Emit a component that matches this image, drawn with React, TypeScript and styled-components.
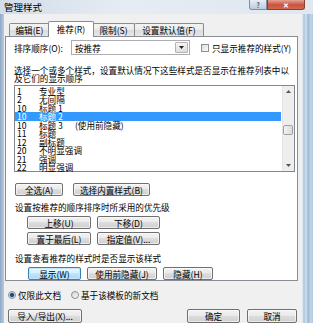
import React from 'react'
import styled, { createGlobalStyle, css } from 'styled-components'

const FONT = `"Noto Sans CJK SC", "Liberation Sans", sans-serif`

const STYLES = [
  { num: '1', name: '专业型' },
  { num: '2', name: '无间隔' },
  { num: '10', name: '标题 1' },
  { num: '10', name: '标题 2', selected: true },
  { num: '10', name: '标题 3', extra: '(使用前隐藏)' },
  { num: '11', name: '标题' },
  { num: '12', name: '副标题' },
  { num: '20', name: '不明显强调' },
  { num: '21', name: '强调' },
  { num: '22', name: '明显强调' },
]

const TABS = [
  { label: '编辑(E)', width: 41 },
  { label: '推荐(R)', width: 46, active: true },
  { label: '限制(S)', width: 43 },
  { label: '设置默认值(F)', width: 70 },
]

export default function App() {
  return (
    <>
      <GlobalStyle />
      <Window>
        <TitleBar>
          <Title>管理样式</Title>
          <CaptionGroup>
            <CaptionButton>?</CaptionButton>
            <CaptionButton $close>✕</CaptionButton>
          </CaptionGroup>
        </TitleBar>
        <Main>
          <LeftEdge />
          <Client>
            <TabStrip>
              {TABS.map((t, i) => (
                <Tab key={i} $active={t.active} $w={t.width}>{t.label}</Tab>
              ))}
            </TabStrip>
            <Panel>
              <TopRow>
                <Label>排序顺序(O):</Label>
                <Select>
                  <SelectValue>按推荐</SelectValue>
                  <SelectArrow>
                    <svg width="5" height="3" viewBox="0 0 5 3"><path d="M0 0h5L2.5 3z" fill="#222" /></svg>
                  </SelectArrow>
                </Select>
                <CheckWrap>
                  <CheckBox />
                  <span>只显示推荐的样式(Y)</span>
                </CheckWrap>
              </TopRow>
              <Desc>选择一个或多个样式，设置默认情况下这些样式是否显示在推荐列表中以<br />及它们的显示顺序</Desc>
              <ListBox>
                <ListItems>
                  {STYLES.map((s, i) => (
                    <ListRow key={i} $selected={s.selected}>
                      <Num>{s.num}</Num>
                      <span>{s.name}</span>
                      {s.extra && <Extra>{s.extra}</Extra>}
                    </ListRow>
                  ))}
                </ListItems>
                <ScrollBar>
                  <ScrollArrow>
                    <svg width="5" height="3" viewBox="0 0 5 3"><path d="M0 3h5L2.5 0z" fill="#555" /></svg>
                  </ScrollArrow>
                  <Thumb />
                  <ScrollArrow $bottom>
                    <svg width="5" height="3" viewBox="0 0 5 3"><path d="M0 0h5L2.5 3z" fill="#555" /></svg>
                  </ScrollArrow>
                </ScrollBar>
              </ListBox>
              <ButtonRow $top={11} $pad={1} $gap={10}>
                <Btn $w={48}>全选(A)</Btn>
                <Btn $w={77}>选择内置样式(B)</Btn>
              </ButtonRow>
              <Caption $top={6}>设置按推荐的顺序排序时所采用的优先级</Caption>
              <MoveGrid>
                <Btn $w={64}>上移(U)</Btn>
                <Btn $w={63}>下移(D)</Btn>
                <Btn $w={64}>置于最后(L)</Btn>
                <Btn $w={63}>指定值(V)...</Btn>
              </MoveGrid>
              <Caption $top={8}>设置查看推荐的样式时是否显示该样式</Caption>
              <ButtonRow $top={4} $pad={14} $gap={6}>
                <Btn $w={53} $focus>显示(W)</Btn>
                <Btn $w={70}>使用前隐藏(J)</Btn>
                <Btn $w={50}>隐藏(H)</Btn>
              </ButtonRow>
            </Panel>
            <RadioRow>
              <RadioItem><Radio $checked />仅限此文档</RadioItem>
              <RadioItem><Radio />基于该模板的新文档</RadioItem>
            </RadioRow>
            <Footer>
              <Btn $w={74} $h={14}>导入/导出(X)...</Btn>
              <Spacer />
              <Btn $w={53} $h={14}>确定</Btn>
              <Btn $w={50} $h={14}>取消</Btn>
            </Footer>
          </Client>
          <RightEdge />
        </Main>
      </Window>
    </>
  )
}

const GlobalStyle = createGlobalStyle`
  html, body {
    margin: 0;
    padding: 0;
    background: #ffffff;
  }
  body {
    font-family: ${FONT};
  }
`

const Window = styled.div`
  width: 313px;
  height: 323px;
  overflow: hidden;
  display: flex;
  flex-direction: column;
  background: #c9d8e9;
  font-family: ${FONT};
  color: #000;
`

const TitleBar = styled.div`
  height: 14px;
  flex: none;
  display: flex;
  align-items: flex-start;
  background: linear-gradient(90deg, #d3dde9 0%, #e6ecf3 40%, #dfe7f0 100%);
`

const Title = styled.div`
  margin: 2px 0 0 4px;
  font-size: 9.5px;
  line-height: 10px;
`

const CaptionGroup = styled.div`
  margin-left: auto;
  margin-right: 8px;
  display: flex;
`

const CaptionButton = styled.div<{ $close?: boolean }>`
  width: 16px;
  height: 9px;
  display: flex;
  align-items: center;
  justify-content: center;
  font-size: 7px;
  font-weight: bold;
  color: #44546a;
  border: 1px solid #7d8ea5;
  border-top: none;
  border-radius: 0 0 0 3px;
  background: linear-gradient(#e7eef6, #bccbdc);

  ${(p) =>
    p.$close &&
    css`
      width: 36px;
      color: #fff;
      border-color: #8a3d33;
      border-radius: 0 0 3px 0;
      background: linear-gradient(#e4a294, #c9523d 55%, #d26a52);
    `}
`

const Main = styled.div`
  flex: 1;
  display: flex;
  min-height: 0;
`

const LeftEdge = styled.div`
  width: 4px;
  flex: none;
  background: linear-gradient(90deg, #8fa9c6, #b8cbe0);
`

const RightEdge = styled.div`
  flex: 1;
  background: linear-gradient(90deg, #eef3f8 0px, #a9c2dc 2px, #d4e2f0 4px, #9db8d6 6px, #c2d5e9 9px, #b0c8e1 11px);
`

const Client = styled.div`
  width: 298px;
  flex: none;
  display: flex;
  flex-direction: column;
  padding-top: 7px;
  box-sizing: border-box;
  background: #f0f0f0;
  font-size: 8.6px;
`

const TabStrip = styled.div`
  height: 15px;
  display: flex;
  align-items: flex-end;
  padding-left: 5px;
`

const Tab = styled.div<{ $active?: boolean; $w: number }>`
  width: ${(p) => p.$w}px;
  height: 13px;
  box-sizing: border-box;
  display: flex;
  align-items: center;
  justify-content: center;
  border: 1px solid #898c95;
  border-bottom: none;
  border-radius: 2px 2px 0 0;
  margin-left: -1px;
  background: linear-gradient(#f3f3f3, #ebebeb 50%, #dcdcdc 51%, #e6e6e6);
  font-size: 8.6px;
  line-height: 10px;
  white-space: nowrap;

  &:first-child {
    margin-left: 0;
  }

  ${(p) =>
    p.$active &&
    css`
      height: 16px;
      margin: 0 -1px -1px -2px;
      background: #fff;
      position: relative;
      z-index: 1;
      padding-bottom: 2px;
    `}
`

const Panel = styled.div`
  margin-left: 1px;
  width: 293px;
  height: 248px;
  box-sizing: border-box;
  border: 1px solid #898c95;
  background: #fff;
  padding-left: 8px;
  display: flex;
  flex-direction: column;
`

const TopRow = styled.div`
  margin-top: 3px;
  height: 15px;
  display: flex;
  align-items: center;
`

const Label = styled.span`
  width: 57px;
  white-space: nowrap;
`

const Select = styled.div`
  width: 119px;
  height: 15px;
  box-sizing: border-box;
  border: 1px solid #abadb3;
  display: flex;
  align-items: center;
  background: #fff;
`

const SelectValue = styled.span`
  flex: 1;
  padding-left: 3px;
`

const SelectArrow = styled.div`
  width: 13px;
  height: 11px;
  margin-right: 1px;
  box-sizing: border-box;
  border: 1px solid #b4b4b4;
  border-radius: 1px;
  background: linear-gradient(#f4f4f4, #dedede);
  display: flex;
  align-items: center;
  justify-content: center;
`

const CheckWrap = styled.label`
  margin-left: 11px;
  display: flex;
  align-items: center;
  gap: 3px;
  white-space: nowrap;
`

const CheckBox = styled.span`
  width: 8px;
  height: 8px;
  box-sizing: border-box;
  border: 1px solid #8e8f8f;
  background: linear-gradient(135deg, #dcdcdc, #fbfbfb);
`

const Desc = styled.div`
  margin-top: 11px;
  line-height: 8px;
  white-space: nowrap;
`

const ListBox = styled.div`
  margin-top: 3px;
  width: 281px;
  height: 87px;
  box-sizing: border-box;
  border: 1px solid #828790;
  display: flex;
`

const ListItems = styled.div`
  flex: 1;
  padding-top: 0.5px;
`

const ListRow = styled.div<{ $selected?: boolean }>`
  height: 8.5px;
  line-height: 8.5px;
  font-size: 8.6px;
  display: flex;
  white-space: nowrap;
  padding-left: 2px;
  margin-right: 1px;

  ${(p) =>
    p.$selected &&
    css`
      background: #3399ff;
      color: #fff;
    `}
`

const Num = styled.span`
  width: 22px;
  flex: none;
`

const Extra = styled.span`
  margin-left: 12px;
`

const ScrollBar = styled.div`
  width: 11px;
  flex: none;
  display: flex;
  flex-direction: column;
  background: #eeeeee;
  border-left: 1px solid #e3e3e3;
`

const ScrollArrow = styled.div<{ $bottom?: boolean }>`
  height: 11px;
  display: flex;
  align-items: center;
  justify-content: center;
  ${(p) => p.$bottom && css`margin-top: auto;`}
`

const Thumb = styled.div`
  margin: 28px 1px 0 0;
  height: 10px;
  box-sizing: border-box;
  border: 1px solid #a0a0a0;
  border-radius: 2px;
  background: linear-gradient(90deg, #f2f2f2, #dcdcdc);
`

const ButtonRow = styled.div<{ $top: number; $pad: number; $gap: number }>`
  margin-top: ${(p) => p.$top}px;
  padding-left: ${(p) => p.$pad}px;
  display: flex;
  gap: ${(p) => p.$gap}px;
`

const Btn = styled.div<{ $w: number; $h?: number; $focus?: boolean }>`
  width: ${(p) => p.$w}px;
  height: ${(p) => p.$h ?? 13}px;
  box-sizing: border-box;
  flex: none;
  display: flex;
  align-items: center;
  justify-content: center;
  border: 1px solid #707070;
  border-radius: 2px;
  background: linear-gradient(#f2f2f2 0%, #ebebeb 45%, #dddddd 50%, #cfcfcf 100%);
  box-shadow: inset 0 0 0 1px rgba(255, 255, 255, 0.6);
  font-size: 8.6px;
  line-height: 10px;
  white-space: nowrap;

  ${(p) =>
    p.$focus &&
    css`
      border-color: #3c7fb1;
      box-shadow: inset 0 0 0 1px #bfe6fb;
      background: linear-gradient(#eaf6fd 0%, #d9f0fc 45%, #bee6fd 50%, #a7d9f5 100%);
    `}
`

const Caption = styled.div<{ $top: number }>`
  margin-top: ${(p) => p.$top}px;
  padding-left: 1px;
  height: 10px;
  line-height: 10px;
  white-space: nowrap;
`

const MoveGrid = styled.div`
  margin-top: 4px;
  padding-left: 13px;
  display: grid;
  grid-template-columns: 64px 63px;
  gap: 3px 6px;
`

const RadioRow = styled.div`
  margin-top: 9px;
  height: 10px;
  padding-left: 4px;
  display: flex;
  align-items: center;
  gap: 10px;
`

const RadioItem = styled.label`
  display: flex;
  align-items: center;
  gap: 2px;
  white-space: nowrap;
`

const Radio = styled.span<{ $checked?: boolean }>`
  width: 8px;
  height: 8px;
  box-sizing: border-box;
  border-radius: 50%;
  border: 1px solid #8e8f8f;
  background: ${(p) =>
    p.$checked
      ? 'radial-gradient(circle, #1f4d8a 0 1.6px, #6b9bd6 2.2px, #eef3f8 2.8px)'
      : 'linear-gradient(135deg, #d6d6d6, #fafafa)'};
`

const Footer = styled.div`
  margin-top: 9px;
  padding: 0 5px 0 4px;
  display: flex;
  gap: 7px;
`

const Spacer = styled.div`
  flex: 1;
`
